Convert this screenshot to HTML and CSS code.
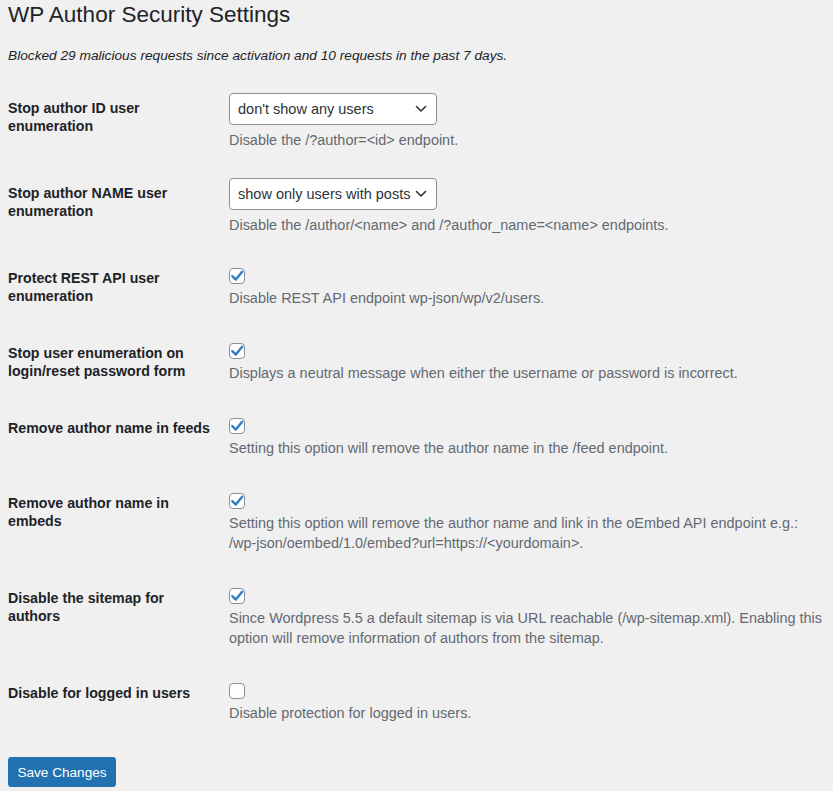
FILE: index.html
```html
<!DOCTYPE html>
<html lang="en">
<head>
<meta charset="utf-8">
<title>WP Author Security Settings</title>
<link rel="stylesheet" href="styles.css">
</head>
<body>
<div class="wrap">
  <h1 class="title">WP Author Security Settings</h1>
  <p class="summary">Blocked 29 malicious requests since activation and 10 requests in the past 7 days.</p>
  <table class="form-table">
    <tr>
      <th>Stop author ID user enumeration</th>
      <td class="field-select">
        <div class="select"><span>don't show any users</span><svg class="chev" viewBox="0 0 12 8" width="12" height="8"><path d="M1.5 1.5 6 6l4.5-4.5" fill="none" stroke="#2c3338" stroke-width="1.6" stroke-linecap="round" stroke-linejoin="round"/></svg></div>
        <p class="desc">Disable the /?author=&lt;id&gt; endpoint.</p>
      </td>
    </tr>
    <tr>
      <th>Stop author NAME user enumeration</th>
      <td class="field-select">
        <div class="select"><span>show only users with posts</span><svg class="chev" viewBox="0 0 12 8" width="12" height="8"><path d="M1.5 1.5 6 6l4.5-4.5" fill="none" stroke="#2c3338" stroke-width="1.6" stroke-linecap="round" stroke-linejoin="round"/></svg></div>
        <p class="desc">Disable the /author/&lt;name&gt; and /?author_name=&lt;name&gt; endpoints.</p>
      </td>
    </tr>
    <tr>
      <th>Protect REST API user enumeration</th>
      <td>
        <span class="check on"><svg viewBox="0 0 16 16" width="16" height="16"><path d="M3.3 8.2 6.8 11.6 13.2 3.8" fill="none" stroke="#2f7ec4" stroke-width="2.4" stroke-linecap="round" stroke-linejoin="round"/></svg></span>
        <p class="desc">Disable REST API endpoint wp-json/wp/v2/users.</p>
      </td>
    </tr>
    <tr>
      <th>Stop user enumeration on login/reset password form</th>
      <td>
        <span class="check on"><svg viewBox="0 0 16 16" width="16" height="16"><path d="M3.3 8.2 6.8 11.6 13.2 3.8" fill="none" stroke="#2f7ec4" stroke-width="2.4" stroke-linecap="round" stroke-linejoin="round"/></svg></span>
        <p class="desc">Displays a neutral message when either the username or password is incorrect.</p>
      </td>
    </tr>
    <tr>
      <th>Remove author name in feeds</th>
      <td>
        <span class="check on"><svg viewBox="0 0 16 16" width="16" height="16"><path d="M3.3 8.2 6.8 11.6 13.2 3.8" fill="none" stroke="#2f7ec4" stroke-width="2.4" stroke-linecap="round" stroke-linejoin="round"/></svg></span>
        <p class="desc">Setting this option will remove the author name in the /feed endpoint.</p>
      </td>
    </tr>
    <tr>
      <th>Remove author name in embeds</th>
      <td>
        <span class="check on"><svg viewBox="0 0 16 16" width="16" height="16"><path d="M3.3 8.2 6.8 11.6 13.2 3.8" fill="none" stroke="#2f7ec4" stroke-width="2.4" stroke-linecap="round" stroke-linejoin="round"/></svg></span>
        <p class="desc">Setting this option will remove the author name and link in the oEmbed API endpoint e.g.:<br>/wp-json/oembed/1.0/embed?url=https://&lt;yourdomain&gt;.</p>
      </td>
    </tr>
    <tr>
      <th>Disable the sitemap for authors</th>
      <td>
        <span class="check on"><svg viewBox="0 0 16 16" width="16" height="16"><path d="M3.3 8.2 6.8 11.6 13.2 3.8" fill="none" stroke="#2f7ec4" stroke-width="2.4" stroke-linecap="round" stroke-linejoin="round"/></svg></span>
        <p class="desc">Since Wordpress 5.5 a default sitemap is via URL reachable (/wp-sitemap.xml). Enabling this<br>option will remove information of authors from the sitemap.</p>
      </td>
    </tr>
    <tr>
      <th>Disable for logged in users</th>
      <td>
        <span class="check"></span>
        <p class="desc">Disable protection for logged in users.</p>
      </td>
    </tr>
  </table>
  <p class="submit"><button class="button-primary" type="button">Save Changes</button></p>
</div>
</body>
</html>
```
FILE: styles.css
```css
html, body {
  margin: 0;
  padding: 0;
  background: #f0f0f1;
}
body {
  font-family: "Liberation Sans", Arial, sans-serif;
  color: #1d2327;
  font-size: 14.5px;
}
.wrap {
  padding: 0 0 0 8px;
}
.title {
  margin: 0;
  font-size: 22.5px;
  font-weight: 400;
  line-height: 30px;
  color: #1d2327;
}
.summary {
  margin: 16px 0 12px;
  font-style: italic;
  font-size: 13.7px;
  line-height: 20px;
  color: #1d2327;
}
.form-table {
  border-collapse: collapse;
  border-spacing: 0;
}
.form-table th {
  width: 212px;
  padding: 21px 9px 0 0;
  vertical-align: top;
  text-align: left;
  font-weight: 700;
  font-size: 14.2px;
  line-height: 18px;
  color: #1d2327;
}
.form-table td {
  padding: 15px 0 15px 0;
  vertical-align: top;
}
.form-table td.field-select {
  padding-bottom: 13px;
}
.select {
  box-sizing: border-box;
  width: 208px;
  height: 32px;
  display: flex;
  align-items: center;
  justify-content: space-between;
  padding: 0 9px 0 8px;
  background: #fff;
  border: 1px solid #8c8f94;
  border-radius: 4px;
  color: #2c3338;
  font-size: 14.5px;
  white-space: nowrap;
}
.chev {
  flex: none;
}
.check {
  box-sizing: border-box;
  display: flex;
  align-items: center;
  justify-content: center;
  width: 16px;
  height: 16px;
  margin: 5px 0 4px 0;
  background: #fff;
  border: 1px solid #8c8f94;
  border-radius: 4px;
  overflow: hidden;
}
.check svg {
  flex: none;
}
.select + .desc {
  margin-top: 5px;
}
.desc {
  margin: 0;
  font-size: 14.45px;
  line-height: 20px;
  color: #646970;
  white-space: nowrap;
}
.submit {
  margin: 19px 0 0;
}
.button-primary {
  height: 30px;
  width: 108px;
  padding: 0;
  background: #2271b1;
  border: 1px solid #2271b1;
  border-radius: 3px;
  color: #fff;
  font-family: inherit;
  font-size: 13.6px;
}
```
